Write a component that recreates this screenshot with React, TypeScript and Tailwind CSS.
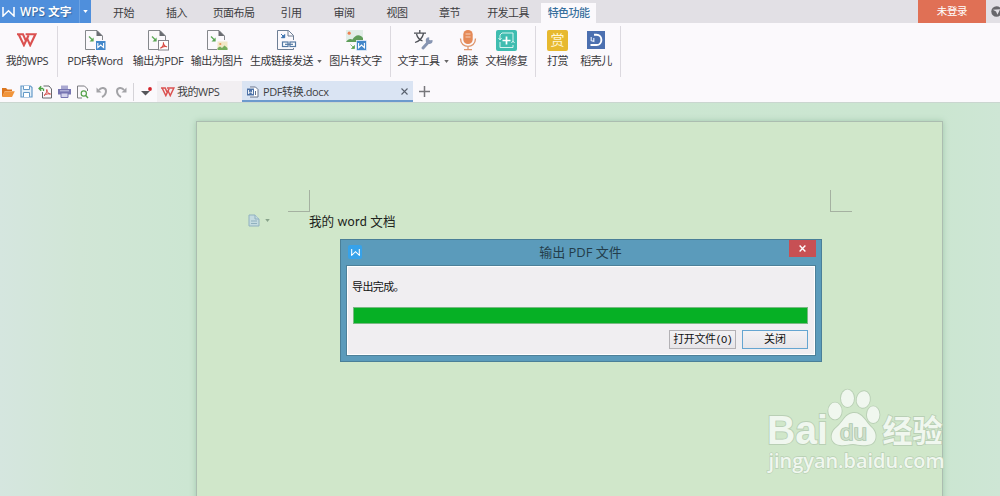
import type { ReactNode } from 'react'

const tabs = [
  { name: '开始', width: 'w-[53px]' },
  { name: '插入', width: 'w-[53px]' },
  { name: '页面布局', width: 'w-[61px]' },
  { name: '引用', width: 'w-[54px]' },
  { name: '审阅', width: 'w-[52px]' },
  { name: '视图', width: 'w-[54px]' },
  { name: '章节', width: 'w-[51px]' },
  { name: '开发工具', width: 'w-[66px]' },
]

function WpsLogo({ className }: { className: string }) {
  return (
    <svg viewBox="0 0 20 14" className={className} fill="none" stroke="#db5150" strokeWidth="2.1" strokeLinejoin="miter">
      <path d="M0 1.3H6L8.8 7.6M1.6 1.3L6.9 12.2L11.6 2.2" />
      <path d="M8.6 1.3H18.4L13.2 12.2L10.2 5.6" />
    </svg>
  )
}

function WMark({ className }: { className: string }) {
  return (
    <svg viewBox="0 0 13 10" className={className} fill="none" stroke="#fff" strokeWidth="1.5">
      <path d="M1 0V9L6.5 3.8L12 9V0" />
    </svg>
  )
}

function Caret({ className = '' }: { className?: string }) {
  return (
    <svg viewBox="0 0 6 4" className={`h-[3px] w-[5px] shrink-0 ${className}`}>
      <path d="M0 0H6L3 4Z" fill="currentColor" />
    </svg>
  )
}

// Sheet with a folded corner and a green arrow, shared by the export buttons
function ExportIcon({ children }: { children: ReactNode }) {
  return (
    <svg viewBox="0 0 22 22" className="h-[22px] w-[22px]" fill="none">
      <path d="M11 20.5H1.5V1.5H13L18.5 7V11" stroke="#85888c" strokeWidth="1" />
      <path d="M12.5 1V7H18.5Z" fill="#6a6d72" />
      <path d="M5 7.5L9 11.5" stroke="#5aa653" strokeWidth="1.2" />
      <path d="M9.6 8.5V12.6H5.5Z" fill="#5aa653" />
      {children}
    </svg>
  )
}

function PdfGlyph() {
  return (
    <g>
      <rect x="11.5" y="11.5" width="10" height="9.5" fill="#fff" stroke="#85858a" />
      <path d="M13.3 19.3C15.5 18 16.8 15.5 16.4 13.4C16.2 15.5 18 17.8 20 17.8C17.5 17 15 18 13.3 19.3Z" stroke="#d84a42" strokeWidth="1.1" />
    </g>
  )
}

function Tool({ icon, label, width, menu }: { icon: ReactNode; label: string; width: string; menu?: boolean }) {
  return (
    <div className={`flex shrink-0 flex-col items-center ${width}`}>
      <div className="flex h-[22px] items-center justify-center">{icon}</div>
      <div className="mt-[2px] flex items-center gap-[4px] whitespace-nowrap text-[11px] leading-[16px] tracking-[-0.5px]">
        {label}
        {menu && <Caret className="text-[#666]" />}
      </div>
    </div>
  )
}

function Divider() {
  return <div className="h-[51px] w-px shrink-0 bg-[#dcd9df]" />
}

function TitleBar() {
  return (
    <header className="flex h-[23px] bg-[#e2e0e5]">
      <div className="flex w-[91px] shrink-0 items-center bg-[#4f8fdc] pl-[2px] text-white">
        <WMark className="h-[10px] w-[13px]" />
        <span className="ml-[5px] w-[57px] whitespace-nowrap text-[11.8px] font-semibold [text-shadow:1px_1px_1px_#33669f]">WPS 文字</span>
        <div className="ml-[2px] flex h-full flex-1 items-center justify-center border-l border-[#6ba2e3]">
          <Caret />
        </div>
      </div>
      <nav className="ml-[6px] flex text-[11px] leading-[26px] tracking-[-0.6px] text-[#3c3c40]">
        {tabs.map((tab) => (
          <div key={tab.name} className={`text-center ${tab.width}`}>
            {tab.name}
          </div>
        ))}
        <div className="mt-[3px] w-[55px] bg-[#fbf9fc] text-center font-medium leading-[20px] text-[#376f9d]">特色功能</div>
      </nav>
      <div className="ml-auto flex">
        <div className="w-[68px] bg-[#e07055] text-center text-[10.5px] leading-[22px] tracking-[-0.4px] text-white">未登录</div>
        <div className="flex w-[14px] items-center overflow-hidden pl-[5px]">
          <svg viewBox="0 0 12 12" className="h-[11px] w-[11px] shrink-0">
            <circle cx="6" cy="6" r="5.7" fill="#67676b" />
            <path d="M2 4L10 3.5L7 9.5L5.5 6Z" fill="#e2e0e5" />
          </svg>
        </div>
      </div>
    </header>
  )
}

function Ribbon() {
  return (
    <div className="flex h-[58px] items-start pt-[3px] text-[#37373a]">
      <div className="flex pt-[3px]">
        <Tool width="w-[54px]" label="我的WPS" icon={<WpsLogo className="h-[14px] w-[20px]" />} />
      </div>
      <div className="ml-[3px]"><Divider /></div>
      <div className="ml-[6px] mr-[7px] flex pt-[3px]">
        <Tool
          width="w-[62px]"
          label="PDF转Word"
          icon={
            <ExportIcon>
              <rect x="12" y="12" width="9.5" height="9" fill="#4287ca" />
              <path d="M13.8 14V18.6L16.7 16L19.6 18.6V14" stroke="#fff" strokeWidth="1.1" />
            </ExportIcon>
          }
        />
        <Tool width="w-[64px]" label="输出为PDF" icon={<ExportIcon><PdfGlyph /></ExportIcon>} />
        <Tool
          width="w-[54px]"
          label="输出为图片"
          icon={
            <ExportIcon>
              <rect x="11.5" y="12.5" width="10" height="8.5" fill="#f2e8c7" />
              <circle cx="14.3" cy="15" r="1.1" fill="#e9965a" />
              <path d="M11.5 21V19L14 17.5L16 19L18.5 16.5L21.5 19V21Z" fill="#76ad5d" />
            </ExportIcon>
          }
        />
        <Tool
          width="w-[84px]"
          label="生成链接发送"
          menu
          icon={
            <svg viewBox="0 0 22 22" className="h-[22px] w-[22px]" fill="none">
              <path d="M5 20.5H2.5V1.5H13.5L18.5 6.5V11M13 1.5V7H18.5M5 20.5H18.5V19" stroke="#6e7f95" />
              <path d="M6 5L9 8M9.7 5.5V8.7H6.5Z" stroke="#3c72ae" fill="#3c72ae" />
              <rect x="7.5" y="13" width="5.5" height="4.5" stroke="#557aa4" strokeWidth="1.2" fill="#fff" />
              <rect x="15" y="13" width="5.5" height="4.5" stroke="#557aa4" strokeWidth="1.2" fill="#fff" />
              <path d="M10 15.3H18" stroke="#557aa4" strokeWidth="1.2" />
            </svg>
          }
        />
        <Tool
          width="w-[55px]"
          label="图片转文字"
          icon={
            <svg viewBox="0 0 22 22" className="h-[22px] w-[22px]" fill="none">
              <rect x="1" y="1" width="17" height="12" fill="#e2eee8" />
              <circle cx="4.2" cy="4.2" r="1.6" fill="#ee8052" />
              <path d="M1 13C3 9.5 5.5 9.5 7.5 10.5C10 5.5 15 4.5 18 9V11H12V13Z" fill="#5f9d5a" />
              <path d="M5.5 15.5L9 19M9.5 16.5V19.5H6.5Z" stroke="#58a04e" fill="#58a04e" strokeWidth=".7" />
              <rect x="11.5" y="11.5" width="10" height="10" fill="#4287ca" stroke="#fbf9fc" strokeWidth=".6" />
              <path d="M13.6 14V18.8L16.5 16L19.4 18.8V14" stroke="#fff" strokeWidth="1.1" />
            </svg>
          }
        />
      </div>
      <Divider />
      <div className="ml-[5px] mr-[7px] flex pt-[3px]">
        <Tool
          width="w-[54px]"
          label="文字工具"
          menu
          icon={
            <svg viewBox="0 0 22 22" className="h-[22px] w-[22px]" fill="none">
              <path d="M7.8 1V4M2 4.2H14M11.5 4.5C10.5 9 7.5 12 3 13.5M4.5 5C5.5 9 8 11 10.5 12" stroke="#4e5157" strokeWidth="1.3" />
              <path d="M11 19L17 12.5" stroke="#8795b2" strokeWidth="3" strokeLinecap="round" />
              <path d="M20.5 11A3.4 3.4 0 1 1 17.2 8.2V11.2H18.6Z" fill="#8795b2" />
            </svg>
          }
        />
        <Tool
          width="w-[35px]"
          label="朗读"
          icon={
            <svg viewBox="0 0 18 22" className="h-[22px] w-[18px]" fill="none">
              <rect x="4.3" y="1" width="9.4" height="14" rx="4.6" fill="#e58a58" />
              <path d="M6.5 5H11.5M6.5 8H11.5" stroke="#f7d2bd" />
              <path d="M1.5 9.5C1.5 20 16.5 20 16.5 9.5M9 17V20.5M5 20.7H13" stroke="#de966c" strokeWidth="1.3" />
            </svg>
          }
        />
        <Tool
          width="w-[43px]"
          label="文档修复"
          icon={
            <svg viewBox="0 0 21 21" className="h-[21px] w-[21px]" fill="none">
              <rect width="21" height="21" rx="2" fill="#3fbdb0" />
              <path d="M4 9V5L6 3H17V11M17 15V17.5H4V12M2.5 8L4 10L5.5 8M15.5 13L17 11L18.5 13" stroke="#d6f4f0" />
              <path d="M10.5 6.5V14.5M6.5 10.5H14.5" stroke="#fff" strokeWidth="1.7" />
            </svg>
          }
        />
      </div>
      <Divider />
      <div className="ml-[4px] mr-[3px] flex pt-[3px]">
        <Tool
          width="w-[35px]"
          label="打赏"
          icon={<div className="h-[21px] w-[21px] rounded-[2px] bg-[#e7b92f] text-center text-[14px] leading-[20px] text-[#fff6d6]">赏</div>}
        />
        <Tool
          width="w-[42px]"
          label="稻壳儿"
          icon={
            <svg viewBox="0 0 18 18" className="h-[18px] w-[18px]" fill="none">
              <rect width="18" height="18" fill="#4c70b0" />
              <path d="M7 3.8H9.5C16 3.8 16 14 9.5 14H3.5" stroke="#fff" strokeWidth="1.9" />
              <path d="M4.2 6V9.5L6.8 10.5V7" stroke="#dce7f8" strokeWidth="1.2" />
            </svg>
          }
        />
      </div>
      <Divider />
    </div>
  )
}

function QuickBar() {
  return (
    <div className="flex h-[21px] items-center text-[#3f3f43]">
      <div className="flex h-full items-center gap-[5px] pl-px">
        <svg viewBox="0 0 14 12" className="h-[12px] w-[14px]">
          <path d="M1 10V2H5L6.5 3.5H11V5H4L1.5 10.5Z" fill="#db761f" />
          <path d="M3.8 5.2H13.8L11 11H1Z" fill="#f1953c" />
        </svg>
        <svg viewBox="0 0 13 13" className="h-[13px] w-[13px]" fill="none" stroke="#659ac8">
          <path d="M1 1H10.5L12 2.5V12H1Z" fill="#e5f0f9" strokeWidth="1.2" />
          <path d="M3.5 1V4.5H9.5V1M3.5 12V7.5H9.5V12" fill="#fff" />
        </svg>
        <svg viewBox="0 0 15 14" className="h-[14px] w-[15px]" fill="none">
          <path d="M4.5 7V13H13.5V4L11 1H5.5" stroke="#67676c" />
          <path d="M6 10.5C8 9 9 7 8.8 4.5C8.8 7 10.5 9 12.5 9C10 8.5 8 9 6 10.5Z" stroke="#d44843" />
          <path d="M5 3.5H1.5M3.2 1.2L1 3.5L3.2 5.8M5.5 3.5V6" stroke="#4da246" strokeWidth="1.3" />
        </svg>
        <svg viewBox="0 0 13 13" className="h-[13px] w-[13px]">
          <path d="M3 0.5H10V4H3Z" fill="#aaa8d1" />
          <path d="M0 4H13V9.5H0Z" fill="#7775b2" />
          <path d="M3 8H10V12.5H3Z" fill="#d4d3ec" stroke="#7775b2" />
          <path d="M2 5.8H11" stroke="#c9c8e6" />
        </svg>
        <svg viewBox="0 0 13 14" className="h-[14px] w-[13px]" fill="none">
          <path d="M6 13H1.5V1H8.5L11.5 4V6" stroke="#7d7d82" />
          <circle cx="7.8" cy="8.5" r="2.6" stroke="#55a14a" strokeWidth="1.2" />
          <path d="M9.7 10.5L12 13" stroke="#55a14a" strokeWidth="1.4" />
        </svg>
        <svg viewBox="0 0 12 12" className="ml-[2px] h-[12px] w-[12px]" fill="none" stroke="#a3a3a7" strokeWidth="2">
          <path d="M3 4C5 0.8 10 1.5 10 5C10 8 8 10 6 11" />
          <path d="M0.5 1.5V6.5H5.5Z" fill="#a3a3a7" stroke="none" />
        </svg>
        <svg viewBox="0 0 12 12" className="ml-[2px] h-[12px] w-[12px]" fill="none" stroke="#a3a3a7" strokeWidth="2">
          <path d="M9 4C7 0.8 2 1.5 2 5C2 8 4 10 6 11" />
          <path d="M11.5 1.5V6.5H6.5Z" fill="#a3a3a7" stroke="none" />
        </svg>
      </div>
      <div className="ml-[6px] h-[18px] w-px bg-[#d5d3d8]" />
      <svg viewBox="0 0 12 10" className="ml-[7px] h-[10px] w-[12px]">
        <path d="M0 4H9L4.5 8.5Z" fill="#55555a" />
        <circle cx="9" cy="2" r="1.9" fill="#d4242b" />
      </svg>
      <div className="ml-[4px] flex h-full w-[85px] items-center bg-[#f2eff2] pl-[4px] text-[11px] tracking-[-0.5px]">
        <WpsLogo className="mr-[2px] h-[10px] w-[14px] shrink-0" />
        <span className="pt-px">我的WPS</span>
      </div>
      <div className="flex h-full w-[171px] items-center border-b-2 border-[#6c9acd] bg-[#dae4f3] pl-[5px] pr-[5px] text-[11px] tracking-[-0.4px]">
        <svg viewBox="0 0 12 12" className="mr-[4px] mt-[2px] h-[12px] w-[12px] shrink-0" fill="none">
          <path d="M3 1H8.5L11 3.5V11H3" fill="#fff" stroke="#66738b" />
          <rect y="2.5" width="7" height="7" fill="#4d72a8" />
          <path d="M1.5 4V7.8L3.5 5.8L5.5 7.8V4" stroke="#fff" strokeWidth=".9" />
          <path d="M8.5 5V9" stroke="#66738b" />
        </svg>
        <span className="pt-[3px]">PDF转换.docx</span>
        <svg viewBox="0 0 7 7" className="ml-auto mt-[2px] h-[7px] w-[7px]" stroke="#58606d" strokeWidth="1.1">
          <path d="M.5.5L6.5 6.5M6.5.5L.5 6.5" />
        </svg>
      </div>
      <svg viewBox="0 0 11 11" className="ml-[6px] h-[11px] w-[11px]" stroke="#77777b" strokeWidth="1.5">
        <path d="M5.5 0V11M0 5.5H11" />
      </svg>
    </div>
  )
}

function ExportDialog() {
  return (
    <div className="absolute left-[340px] top-[136px] flex h-[123px] w-[482px] flex-col border border-[#4a7f98] bg-[#5b9bbb] px-[5px] pb-[5px]">
      <div className="flex h-[25px] items-start">
        <div className="ml-[2px] mt-[5px] flex h-[14px] w-[14px] items-center justify-center rounded-[2px] bg-[#36a2ea]">
          <WMark className="h-[7px] w-[9px]" />
        </div>
        <div className="ml-[10px] flex-1 text-center text-[13px] leading-[25px] text-[#233d4b]">输出 PDF 文件</div>
        <div className="flex h-[17px] w-[27px] items-center justify-center bg-[#c75054]">
          <svg viewBox="0 0 8 8" className="h-[7px] w-[7px]" stroke="#fff" strokeWidth="1.6">
            <path d="M.7.7L7.3 7.3M7.3.7L.7 7.3" />
          </svg>
        </div>
      </div>
      <div className="flex-1 border border-[#4d8099] bg-[#f0eef1] pl-[6px] pr-[7px] pt-[13px] text-[11px] leading-[16px] text-[#111] shadow-[inset_0_0_0_1px_#fff]">
        <div className="-ml-px tracking-[-0.6px]">导出完成。</div>
        <div className="mt-[12px] h-[17px] border border-[#79b983] bg-[#06b025]" />
        <div className="mt-[6px] flex justify-end gap-[6px]">
          <div className="h-[19px] w-[67px] border border-[#b3b1b5] bg-gradient-to-b from-[#f3f2f4] to-[#e7e5e9] text-center tracking-[-0.4px]">
            打开文件<span className="font-['Liberation_Mono',monospace] text-[10.5px] tracking-[-0.9px]">(O)</span>
          </div>
          <div className="h-[19px] w-[66px] border border-[#65a5d1] bg-gradient-to-b from-[#f3f2f4] to-[#e7e5e9] text-center">关闭</div>
        </div>
      </div>
    </div>
  )
}

function Watermark() {
  return (
    <svg viewBox="0 0 190 96" className="absolute left-[762px] top-[282px] h-[96px] w-[190px]" fill="#f0f7ef" stroke="#b9cfb5" strokeWidth="1.8" paintOrder="stroke">
      <text x="5" y="58.5" fontFamily="Liberation Sans, Arial, sans-serif" fontWeight="700" fontSize="40" textLength="61" lengthAdjust="spacingAndGlyphs">Bai</text>
      <ellipse cx="73" cy="26" rx="6.7" ry="8.4" />
      <ellipse cx="85.5" cy="13.3" rx="6.5" ry="8.7" />
      <ellipse cx="101.3" cy="14.5" rx="6.6" ry="8.4" transform="rotate(10 101.3 14.5)" />
      <ellipse cx="111.2" cy="29.7" rx="6.3" ry="8.4" />
      <path d="M91 28C100 27 103 36 109 42C117 49 114 60 105 60C98 61 95 59 91 59C86 59 83 61 78 60C68 59 67 48 75 42C81 37 83 29 91 28Z" />
      <text x="78" y="55" fontFamily="Liberation Sans, Arial, sans-serif" fontSize="22" fill="#cfe0cb" stroke="#aec8ae" strokeWidth="1.6" textLength="27" lengthAdjust="spacingAndGlyphs">du</text>
      <text x="120.5" y="57" fontFamily="Noto Sans CJK SC, sans-serif" fontWeight="700" fontSize="31" textLength="60" lengthAdjust="spacingAndGlyphs">经验</text>
      <text x="6.5" y="82.5" fontFamily="Open Sans, sans-serif" fontSize="20" fontWeight="600" strokeWidth="1.3" textLength="176" lengthAdjust="spacingAndGlyphs">jingyan.baidu.com</text>
    </svg>
  )
}

function DocumentArea() {
  return (
    <main className="relative h-[394px] overflow-hidden bg-[linear-gradient(90deg,#d5e6df_0px,#d1e6d6_80px,#cce6d2_190px,#cbe6d1_940px,#cee6d5_1000px)] pl-[196px] pr-[57px] pt-[18px]">
      <div className="h-[400px] w-[747px] border border-[#abbdb0] bg-[#d0e7ca] pt-[68px] shadow-[0_0_6px_#a3c7ad]">
        <div className="ml-[91px] mr-[90px] flex justify-between">
          <div className="h-[22px] w-[22px] border-b border-r border-[#a5b1a1]" />
          <div className="h-[22px] w-[22px] border-b border-l border-[#a5b1a1]" />
        </div>
        <div className="ml-[51px] flex h-[17px] items-center text-[#202420]">
          <svg viewBox="0 0 12 13" className="h-[13px] w-[12px] shrink-0" fill="#c4dbe0" stroke="#90b1bf">
            <path d="M1 1H7L11 5V12H1Z" />
            <path d="M7 1V5H11M3 7H9M3 9.5H9" />
          </svg>
          <Caret className="ml-[5px] text-[#87a38a]" />
          <span className="ml-[39px] pt-[3px] text-[12.6px] leading-[16px]">
            我的 <span className="font-['Lato',sans-serif] tracking-[0.3px]">word</span> 文档
          </span>
        </div>
      </div>
      <ExportDialog />
      <Watermark />
    </main>
  )
}

export default function App() {
  return (
    <div className="h-[496px] w-[1000px] overflow-hidden bg-[#fbf9fc] font-['Open_Sans','Noto_Sans_CJK_SC',sans-serif]">
      <TitleBar />
      <Ribbon />
      <QuickBar />
      <div className="h-px bg-[#cad6d0]" />
      <DocumentArea />
    </div>
  )
}
